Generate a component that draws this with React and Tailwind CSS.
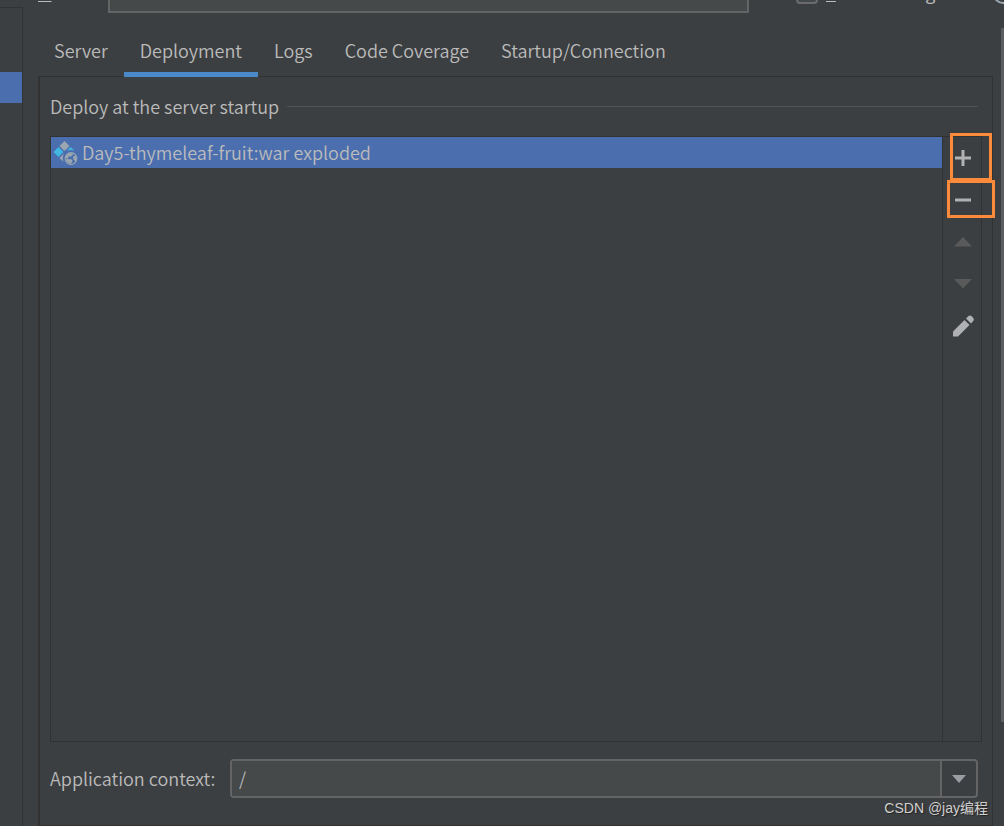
import { useState } from 'react'

const TABS = ['Server', 'Deployment', 'Logs', 'Code Coverage', 'Startup/Connection']

function ArtifactIcon() {
  return (
    <svg width="24" height="24" viewBox="0 0 24 24" aria-hidden="true" className="shrink-0">
      <path d="M10.500 0L15.500 5L10.500 10L5.500 5Z" fill="#9aa7b0" />
      <path d="M4.500 6L9.500 11L4.500 16L-.5 11Z" fill="#40b6e0" />
      <path d="M16.500 6L20.500 9.600Q16 8.200 12.500 10Z" fill="#40b6e0" />
      <path d="M10 12.500Q8 16.500 9.500 21L5.500 17Z" fill="#9aa7b0" />
      <circle cx="17" cy="17.500" r="5.800" fill="none" stroke="#9aa7b0" strokeWidth="1.200" />
      <path d="M11.500 17Q12 13 16 12L19.500 13L17 15.500L14.500 15.500L14 18Z" fill="#9aa7b0" />
      <path d="M14 18L18 18.500L18.500 20.500L16.500 23Q13 22 11.800 18.500Z" fill="#9aa7b0" />
      <path d="M19 15.500L22 14.500Q23.500 17.500 21.500 20.500L19.500 18.500Z" fill="#9aa7b0" />
    </svg>
  )
}

function ToolButton({ label, disabled, children }) {
  return (
    <button type="button" aria-label={label} disabled={disabled} className="flex h-[42px] w-full items-center justify-center pl-0.5">
      {children}
    </button>
  )
}

function Toolbar() {
  return (
    <div className="relative flex w-[39px] shrink-0 flex-col border-l border-[#323232]">
      <ToolButton label="Add">
        <svg width="16" height="16" viewBox="0 0 16 16" fill="#afb1b3">
          <path d="M6.500 0H9.500V6.500H16V9.500H9.500V16H6.500V9.500H0V6.500H6.500Z" />
        </svg>
      </ToolButton>
      <ToolButton label="Remove">
        <svg width="16" height="16" viewBox="0 0 16 16" fill="#afb1b3">
          <path d="M0 6.500H16V9.500H0Z" />
        </svg>
      </ToolButton>
      <ToolButton label="Move up" disabled>
        <svg width="18" height="10" viewBox="0 0 18 10" fill="#5a5a5a">
          <path d="M9 0L18 9.500H0Z" />
        </svg>
      </ToolButton>
      <ToolButton label="Move down" disabled>
        <svg width="18" height="10" viewBox="0 0 18 10" fill="#5a5a5a">
          <path d="M0 0H18L9 9.500Z" />
        </svg>
      </ToolButton>
      <ToolButton label="Edit">
        <svg width="22" height="22" viewBox="0 0 22 22" fill="#afb1b3">
          <path d="M12.500 5L17.500 10L6 21.500H1V16.500Z" />
          <path d="M14 3.500L16.500 1Q18 -.2 19.500 1L21.200 3Q22.400 4.500 21.200 6L19 8.500Z" />
        </svg>
      </ToolButton>
      <span className="absolute -top-1 left-[7px] h-12 w-[42px] border-3 border-[#fb8b3b]" />
      <span className="absolute top-[43px] left-1 h-[38px] w-12 border-3 border-[#fb8b3b]" />
    </div>
  )
}

function NameRow() {
  return (
    <div className="-mr-[7px] flex h-[13px] items-end overflow-hidden font-['Open_Sans',sans-serif] font-normal">
      <label htmlFor="name" className="w-[70px] shrink-0 pb-2"><u>N</u>ame:</label>
      <input id="name" className="h-8 w-[641px] min-w-0 border-2 border-[#646464] bg-[#45494a] px-2 outline-none" />
      <label className="ml-[47px] flex items-end whitespace-nowrap">
        <input type="checkbox" className="mb-[9px] size-[22px] shrink-0 appearance-none rounded border-2 border-[#6b6b6b] bg-[#43494a]" />
        <span className="ml-2 pb-2"><u>S</u>hare through VCS</span>
      </label>
      <svg width="20" height="20" viewBox="0 0 20 20" className="mr-[-9px] mb-[9px] ml-auto shrink-0">
        <circle cx="10" cy="10" r="9" fill="none" stroke="#9aa7b0" strokeWidth="2" />
      </svg>
    </div>
  )
}

export default function App() {
  const [tab, setTab] = useState('Deployment')
  const [context, setContext] = useState('/')

  return (
    <div className="flex h-screen overflow-hidden bg-[#3c3f41] font-['Noto_Sans_CJK_SC',sans-serif] text-[18px] leading-6 font-[350] text-[#bbbbbb]">
      <aside className="mt-[7px] w-[23px] shrink-0 border-t border-r border-[#323232]">
        <div className="mt-16 h-[31px] bg-[#4b6eaf]" />
      </aside>

      <main className="ml-[15px] flex min-w-0 flex-1 flex-col">
        <NameRow />

        <nav className="relative z-10 mt-3 flex" role="tablist">
          {TABS.map(name => (
            <button
              key={name}
              type="button"
              role="tab"
              aria-selected={tab === name}
              onClick={() => setTab(name)}
              className={`h-[52px] border-b-5 px-4 pt-0.5 whitespace-nowrap ${tab === name ? 'border-[#4a88c7]' : 'border-transparent'}`}
            >
              {name}
            </button>
          ))}
        </nav>

        <section className="relative -mt-px mr-1 flex min-h-0 flex-1 flex-col border border-l-2 border-[#323232] px-2.5">
          <div className="flex h-[59px] items-center pr-1">
            <h2 className="pr-2 pb-0.5">Deploy at the server startup</h2>
            <hr className="flex-1 border-[#515355]" />
          </div>

          <div className="flex min-h-0 flex-1 border border-[#323232]">
            <ul className="min-w-0 flex-1">
              <li className="flex h-[31px] items-center gap-1 bg-[#4b6eaf] pt-px pl-[3px]">
                <ArtifactIcon />
                <span className="pb-0.5">Day5-thymeleaf-fruit:war exploded</span>
              </li>
            </ul>
            <Toolbar />
          </div>

          <div className="flex items-center pt-[17px] pr-1 pb-[27px]">
            <label htmlFor="context" className="w-[180px] shrink-0 pb-0.5">Application context:</label>
            <div className="flex h-[39px] min-w-0 flex-1 rounded border-2 border-[#646464]">
              <input
                id="context"
                value={context}
                onChange={e => setContext(e.target.value)}
                className="min-w-0 flex-1 bg-[#45494a] px-[7px] pb-0.5 outline-none"
              />
              <button type="button" aria-label="Show contexts" className="flex w-9 items-center justify-center border-l-2 border-[#646464]">
                <svg width="14" height="8" viewBox="0 0 14 8" fill="#9a9da1">
                  <path d="M0 0H14L7 8Z" />
                </svg>
              </button>
            </div>
          </div>

          <p className="absolute right-1 bottom-[7px] font-['Liberation_Sans','Noto_Sans_CJK_SC',sans-serif] text-[14px] leading-5 font-normal text-[#d0d0d0] [text-shadow:1px_1px_1px_#222]">
            CSDN @jay编程
          </p>
        </section>
      </main>

      <div className="mt-7 ml-1 h-[694px] w-[3px] shrink-0 bg-[#5c5d5e]" />
    </div>
  )
}
